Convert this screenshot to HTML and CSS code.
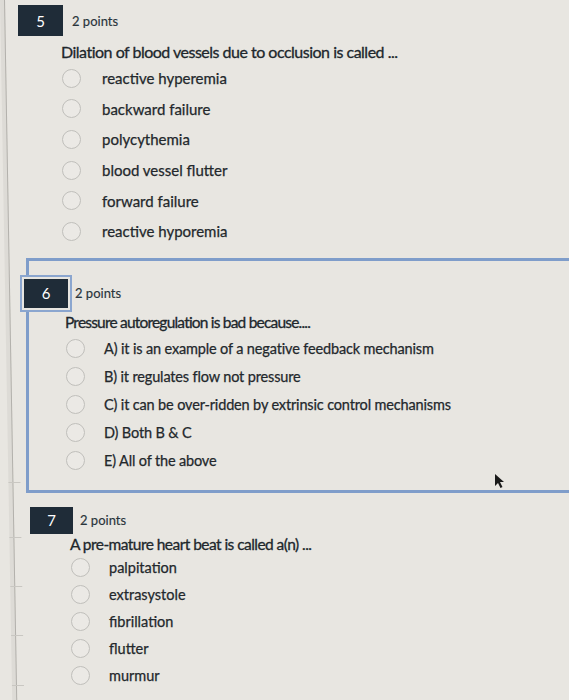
FILE: index.html
```html
<!DOCTYPE html>
<html>
<head>
<meta charset="utf-8">
<link rel="stylesheet" href="styles.css">
</head>
<body>
<div class="page">
  <div class="sidebar">
    <div class="side-row r1"></div>
    <div class="side-row r2"></div>
    <div class="side-row r3"></div>
    <div class="side-row r4"></div>
    <div class="side-row r5"></div>
  </div>
  <main class="content">
    <section class="question q5">
      <div class="qhead">
        <div class="badge">5</div>
        <span class="points">2 points</span>
      </div>
      <p class="qtext">Dilation of blood vessels due to occlusion is called ...</p>
      <ul class="options">
        <li><span class="radio"></span><span class="label">reactive hyperemia</span></li>
        <li><span class="radio"></span><span class="label">backward failure</span></li>
        <li><span class="radio"></span><span class="label">polycythemia</span></li>
        <li><span class="radio"></span><span class="label">blood vessel flutter</span></li>
        <li><span class="radio"></span><span class="label">forward failure</span></li>
        <li><span class="radio"></span><span class="label">reactive hyporemia</span></li>
      </ul>
    </section>

    <section class="question q6">
      <div class="qhead">
        <div class="badge">6</div>
        <span class="points">2 points</span>
      </div>
      <p class="qtext">Pressure autoregulation is bad because....</p>
      <ul class="options">
        <li><span class="radio"></span><span class="label">A) it is an example of a negative feedback mechanism</span></li>
        <li><span class="radio"></span><span class="label">B) it regulates flow not pressure</span></li>
        <li><span class="radio"></span><span class="label">C) it can be over-ridden by extrinsic control mechanisms</span></li>
        <li><span class="radio"></span><span class="label">D) Both B &amp; C</span></li>
        <li><span class="radio"></span><span class="label">E) All of the above</span></li>
      </ul>
      <svg class="cursor" width="12" height="16" viewBox="0 0 12 16"><path d="M1 1 L1 13 L4 10 L6.5 15 L8.5 14 L6 9 L10 9 Z" fill="#1a1a1a"/></svg>
    </section>

    <section class="question q7">
      <div class="qhead">
        <div class="badge">7</div>
        <span class="points">2 points</span>
      </div>
      <p class="qtext">A pre-mature heart beat is called a(n) ...</p>
      <ul class="options">
        <li><span class="radio"></span><span class="label">palpitation</span></li>
        <li><span class="radio"></span><span class="label">extrasystole</span></li>
        <li><span class="radio"></span><span class="label">fibrillation</span></li>
        <li><span class="radio"></span><span class="label">flutter</span></li>
        <li><span class="radio"></span><span class="label">murmur</span></li>
      </ul>
    </section>
  </main>
</div>
</body>
</html>
```

FILE: styles.css
```css
html, body {
  margin: 0;
  padding: 0;
  background: #e8e6e1;
}
body {
  font-family: Lato, "Noto Sans", sans-serif;
  color: #22292e;
  width: 569px;
  height: 700px;
  overflow: hidden;
}
.page {
  display: flex;
  height: 700px;
}
.sidebar {
  width: 4px;
  flex: none;
  border-right: 1px solid #b3b1ac;
  background: #dddbd6;
  transform-origin: top left;
  transform: skewX(1deg);
  position: relative;
  z-index: 1;
}
.side-row {
  height: 0;
  border-top: 1px solid #c9c7c2;
  width: 12px;
}
.r1 { margin-top: 482px; }
.r2 { margin-top: 54px; }
.r3 { margin-top: 48px; }
.r4 { margin-top: 48px; }
.r5 { margin-top: 49px; }
.content {
  flex: 1;
  position: relative;
}
.question {
  position: relative;
}
.qhead {
  display: flex;
  align-items: center;
}
.badge {
  background: #1f2c38;
  color: #fff;
  font-size: 15px;
  display: flex;
  align-items: center;
  justify-content: center;
  flex: none;
}
.points {
  font-size: 13px;
  color: #2a343b;
  -webkit-text-stroke: 0.15px #2a343b;
}
.qtext {
  margin: 0;
  font-size: 16px;
  line-height: 20px;
  letter-spacing: -0.5px;
  color: #20272c;
  -webkit-text-stroke: 0.3px #20272c;
}
.options {
  list-style: none;
  margin: 0;
  padding: 0;
}
.options li {
  display: flex;
  align-items: center;
}
.radio {
  width: 19px;
  height: 19px;
  border-radius: 50%;
  border: 1.5px solid #c0bfbb;
  background: #ebe9e5;
  box-sizing: border-box;
  flex: none;
}
.label {
  font-size: 15px;
  color: #23282c;
  -webkit-text-stroke: 0.25px #23282c;
}

/* Question 5 */
.q5 {
  padding: 5px 0 0 13px;
}
.q5 .badge {
  width: 45px;
  height: 31px;
}
.q5 .points {
  margin-left: 9px;
}
.q5 .qtext {
  margin: 6px 0 0 43px;
}
.q5 .options {
  margin: 1px 0 0 44px;
}
.q5 .options li {
  height: 30.6px;
}
.q5 .label {
  margin-left: 21px;
}

/* Question 6 */
.q6 {
  margin: 11px 0 0 21px;
  border: 3px solid #7f9dca;
  border-right: none;
  padding: 18px 0 14px 0;
  box-sizing: border-box;
  height: 235px;
}
.q6 .badge {
  width: 44px;
  height: 29px;
  margin-left: -5px;
  box-shadow: 0 0 0 2px #e8e6e1, 0 0 0 4px #8ba6cf;
}
.q6 .points {
  margin-left: 7px;
}
.q6 .qtext {
  margin: 4px 0 0 36px;
  font-size: 15.5px;
  letter-spacing: -0.8px;
}
.q6 .options {
  margin: 3px 0 0 37px;
}
.q6 .options li {
  height: 28px;
}
.q6 .label {
  margin-left: 19px;
  font-size: 14.5px;
  letter-spacing: -0.15px;
}
.cursor {
  position: absolute;
  left: 465px;
  top: 212px;
}

/* Question 7 */
.q7 {
  padding: 14px 0 0 25px;
}
.q7 .badge {
  width: 43px;
  height: 27px;
}
.q7 .points {
  margin-left: 7px;
}
.q7 .qtext {
  margin: 0 0 0 40px;
  font-size: 15.5px;
  letter-spacing: -0.55px;
}
.q7 .options {
  margin: 0 0 0 41px;
}
.q7 .options li {
  height: 27px;
}
.q7 .label {
  margin-left: 19px;
  font-size: 14.5px;
}
```
